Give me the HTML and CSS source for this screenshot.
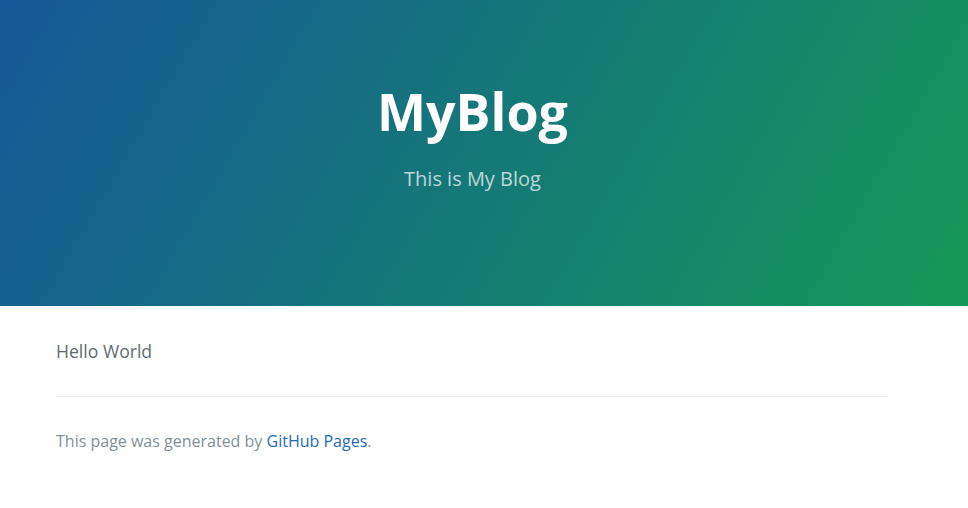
FILE: index.html
```html
<!DOCTYPE html>
<html lang="en">
<head>
<meta charset="utf-8">
<title>MyBlog</title>
<link rel="stylesheet" href="styles.css">
</head>
<body>
<section class="page-header">
  <div class="header-inner">
    <h1 class="project-name">MyBlog</h1>
    <h2 class="project-tagline">This is My Blog</h2>
  </div>
</section>
<section class="main-content">
  <p class="post">Hello World</p>
  <footer class="site-footer">
    <span class="site-footer-credits">This page was generated by <a href="#">GitHub Pages</a>.</span>
  </footer>
</section>
</body>
</html>
```
FILE: styles.css
```css
html, body {
  margin: 0;
  padding: 0;
}
body {
  font-family: "Open Sans", "Helvetica Neue", Helvetica, Arial, sans-serif;
  font-size: 16px;
  line-height: 1.5;
  color: #606c71;
  background: #fff;
}
.page-header {
  height: 306px;
  box-sizing: border-box;
  color: #fff;
  background-color: #159957;
  background-image: linear-gradient(120deg, #155799, #159957);
}
.header-inner {
  width: 945px;
  box-sizing: border-box;
  padding-top: 72px;
  text-align: center;
}
.project-name {
  margin: 0 0 14px;
  font-size: 52px;
  font-weight: 700;
  line-height: 78px;
}
.project-tagline {
  margin: 0;
  font-size: 20px;
  font-weight: 400;
  line-height: 30px;
  opacity: 0.7;
}
.main-content {
  width: 945px;
  box-sizing: border-box;
  padding: 32px 56px;
  font-size: 17.6px;
}
.post {
  margin: 0;
  line-height: 26.4px;
}
.site-footer {
  margin-top: 32px;
  padding-top: 32px;
  border-top: 1px solid #eff0f1;
  font-size: 16px;
  line-height: 24px;
}
.site-footer-credits {
  color: #819198;
}
.site-footer a {
  color: #1e6bb8;
  text-decoration: none;
}
```
